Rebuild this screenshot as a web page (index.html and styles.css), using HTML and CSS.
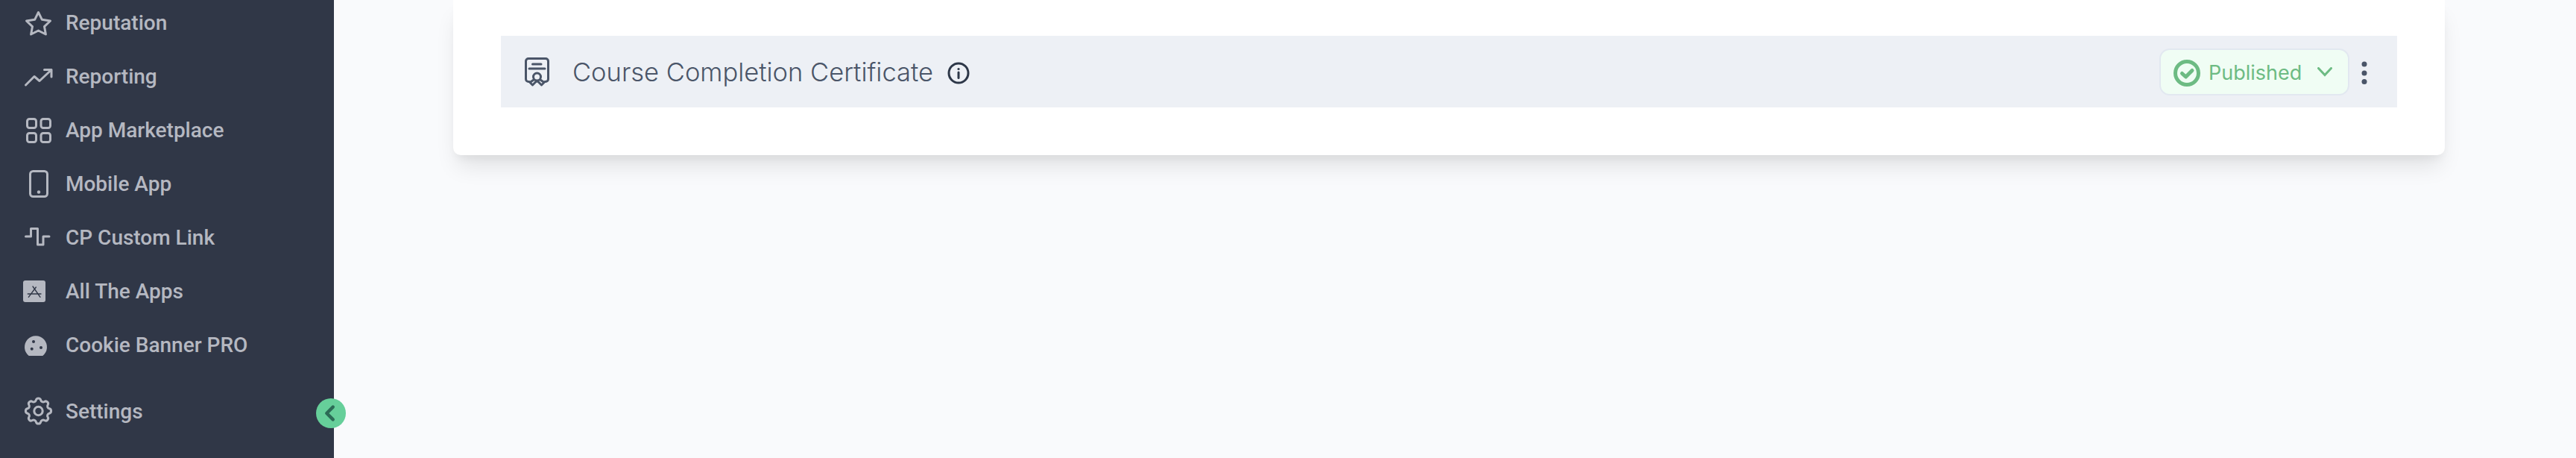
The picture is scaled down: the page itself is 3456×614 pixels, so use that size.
FILE: index.html
```html
<!DOCTYPE html>
<html lang="en">
<head>
    <meta charset="UTF-8">
    <title>Course Completion Certificate</title>
    <link rel="stylesheet" href="styles.css">
</head>
<body>
    <aside class="sidebar">
        <nav class="side-nav">
            <a class="nav-item" href="#">
                <svg class="nav-icon" viewBox="0 0 40 40"><polygon points="19.5,6.5 24.4,16.3 35.5,18 27.5,25.6 29.4,36 19.5,31 9.6,36 11.5,25.6 3.5,18 14.6,16.3"/></svg>
                <span>Reputation</span>
            </a>
            <a class="nav-item" href="#">
                <svg class="nav-icon" viewBox="0 0 40 40"><path d="M2.5 32L14 20.5l7 6L37 11.5M27.5 11.5H37V21"/></svg>
                <span>Reporting</span>
            </a>
            <a class="nav-item" href="#">
                <svg class="nav-icon" viewBox="0 0 40 40">
                    <rect x="4.5" y="5.5" width="12" height="12" rx="3"/>
                    <rect x="23" y="5.5" width="12.5" height="12" rx="3"/>
                    <rect x="4.5" y="24.5" width="12" height="12" rx="3"/>
                    <rect x="23" y="24.5" width="12.5" height="12" rx="3"/>
                </svg>
                <span>App Marketplace</span>
            </a>
            <a class="nav-item" href="#">
                <svg class="nav-icon" viewBox="0 0 40 40">
                    <rect x="8.5" y="3.5" width="23" height="34" rx="4"/>
                    <circle class="icon-fill" cx="20" cy="31.5" r="2.2"/>
                </svg>
                <span>Mobile App</span>
            </a>
            <a class="nav-item" href="#">
                <svg class="nav-icon" viewBox="0 0 40 40"><path d="M2.5 19H9.5V8.5H18.5V30H26V19H34"/></svg>
                <span>CP Custom Link</span>
            </a>
            <a class="nav-item" href="#">
                <svg class="nav-icon" viewBox="0 0 40 40">
                    <rect class="icon-fill" x="-1" y="6" width="30" height="29" rx="3"/>
                    <path class="icon-cut" d="M12 14l10 14.3M16.3 15L6.3 28.3M5.3 24H23"/>
                </svg>
                <span>All The Apps</span>
            </a>
            <a class="nav-item" href="#">
                <svg class="nav-icon" viewBox="0 0 40 40">
                    <path class="icon-fill" d="M6.7 35a15 15 0 1 1 18.6 0z"/>
                    <circle class="icon-dot" cx="13" cy="16" r="2"/>
                    <circle class="icon-dot" cx="23" cy="24" r="2"/>
                    <circle class="icon-dot" cx="10.7" cy="25.7" r="2"/>
                </svg>
                <span>Cookie Banner PRO</span>
            </a>
            <a class="nav-item nav-settings" href="#">
                <svg class="nav-icon" viewBox="0 0 40 40">
                    <g transform="translate(-3.3 -2.8) scale(1.9)" stroke-width="1.6">
                        <path d="M10.325 4.317c.426-1.756 2.924-1.756 3.35 0a1.724 1.724 0 002.573 1.066c1.543-.94 3.31.826 2.37 2.37a1.724 1.724 0 001.065 2.572c1.756.426 1.756 2.924 0 3.35a1.724 1.724 0 00-1.066 2.573c.94 1.543-.826 3.31-2.37 2.37a1.724 1.724 0 00-2.572 1.065c-.426 1.756-2.924 1.756-3.35 0a1.724 1.724 0 00-2.573-1.066c-1.543.94-3.31-.826-2.37-2.37a1.724 1.724 0 00-1.065-2.572c-1.756-.426-1.756-2.924 0-3.35a1.724 1.724 0 001.066-2.573c-.94-1.543.826-3.31 2.37-2.37.996.608 2.296.07 2.572-1.065z"/>
                        <circle cx="12" cy="12" r="3"/>
                    </g>
                </svg>
                <span>Settings</span>
            </a>
        </nav>
        <button class="collapse-btn">
            <svg viewBox="0 0 40 40" width="40" height="40"><path d="M22.7 11.7L14.3 20l8.4 8.3"/></svg>
        </button>
    </aside>

    <main class="main">
        <section class="card">
            <div class="cert-row">
                <svg class="cert-icon" viewBox="0 0 40 40">
                    <path d="M11 33.5H10A3.5 3.5 0 0 1 6.5 30V6A3.5 3.5 0 0 1 10 2.5H33A3.5 3.5 0 0 1 36.5 6V30A3.5 3.5 0 0 1 33 33.5H32"/>
                    <path d="M15.5 10H27M11 16H32"/>
                    <circle cx="21.5" cy="27" r="5"/>
                    <path d="M17 31l-5 3.5 3.5 3.5 4-4 2-1.5 2 1.5 4 4 3.5-3.5-5-3.5"/>
                </svg>
                <h2 class="cert-title">Course Completion Certificate</h2>
                <svg class="info-icon" viewBox="0 0 30 30">
                    <circle cx="15" cy="15" r="13"/>
                    <path d="M15 14v7.5"/>
                    <circle class="info-dot" cx="15" cy="9.5" r="1.6"/>
                </svg>
                <div class="cert-actions">
                    <button class="status-pill">
                        <svg class="status-check" viewBox="0 0 36 36">
                            <circle cx="18" cy="18" r="15.5"/>
                            <path d="M11.5 18.5l5 4.5 8.5-8.5"/>
                        </svg>
                        <span class="status-label">Published</span>
                        <svg class="status-chevron" viewBox="0 0 20 13"><path d="M1.5 1.5L10 10.5l8.5-9"/></svg>
                    </button>
                    <svg class="kebab" viewBox="0 0 8 32">
                        <circle cx="4" cy="4" r="3.5"/>
                        <circle cx="4" cy="16" r="3.5"/>
                        <circle cx="4" cy="27.5" r="3.5"/>
                    </svg>
                </div>
            </div>
        </section>
    </main>
</body>
</html>
```

FILE: styles.css
```css
:root {
    --sidebar: #303747;
    --sidebar-text: #b5b8c1;
    --row: #edf0f5;
    --slate: #4a5568;
    --green: #6dbb83;
}

* {
    margin: 0;
    padding: 0;
    box-sizing: border-box;
}

body {
    display: flex;
    height: 614px;
    overflow: hidden;
    background: #f9fafc;
    font-family: 'Inter', 'Liberation Sans', sans-serif;
}

.sidebar {
    position: relative;
    flex: 0 0 448px;
    background: var(--sidebar);
}

.side-nav {
    margin-top: -6px;
    padding-left: 32px;
}

.nav-item {
    display: flex;
    align-items: center;
    gap: 16px;
    height: 72px;
    color: var(--sidebar-text);
    font-family: 'Roboto', sans-serif;
    font-size: 28px;
    font-weight: 500;
    text-decoration: none;
}

.nav-settings {
    margin-top: 17px;
}

.nav-icon {
    flex: none;
    width: 40px;
    height: 40px;
    overflow: visible;
    fill: none;
    stroke: var(--sidebar-text);
    stroke-width: 3;
    stroke-linecap: round;
    stroke-linejoin: round;
}

.nav-icon .icon-fill {
    fill: var(--sidebar-text);
    stroke: none;
}

.nav-icon .icon-cut {
    stroke: var(--sidebar);
    stroke-width: 1.4;
}

.nav-icon .icon-dot {
    fill: var(--sidebar);
    stroke: none;
}

.collapse-btn {
    position: absolute;
    right: -16px;
    bottom: 40px;
    width: 40px;
    height: 40px;
    border: none;
    border-radius: 50%;
    background: #66cf9a;
}

.collapse-btn svg {
    display: block;
    fill: none;
    stroke: #2c6b56;
    stroke-width: 4.5;
    stroke-linecap: round;
    stroke-linejoin: round;
}

.main {
    flex: 1;
    padding: 0 176px 0 160px;
}

.card {
    padding: 48px 64px 64px;
    background: white;
    border-radius: 0 0 10px 10px;
    box-shadow: 0 20px 30px -6px rgba(0,0,0,0.1), 0 8px 12px -4px rgba(0,0,0,0.05);
}

.cert-row {
    display: flex;
    align-items: center;
    height: 96px;
    padding: 0 40px 0 27px;
    background: var(--row);
    color: var(--slate);
}

.cert-icon {
    flex: none;
    width: 40px;
    height: 40px;
    fill: none;
    stroke: var(--slate);
    stroke-width: 3;
    stroke-linejoin: round;
    stroke-linecap: round;
}

.cert-title {
    margin-left: 29px;
    font-size: 34.5px;
    font-weight: 300;
}

.info-icon {
    flex: none;
    width: 30px;
    height: 30px;
    margin: 4px 0 0 19px;
    fill: none;
    stroke: #2d3748;
    stroke-width: 3;
    stroke-linecap: round;
}

.info-icon .info-dot {
    fill: #2d3748;
    stroke: none;
}

.cert-actions {
    display: flex;
    align-items: center;
    gap: 16px;
    margin-left: auto;
}

.status-pill {
    display: flex;
    align-items: center;
    width: 255px;
    height: 63px;
    padding-left: 17px;
    border: 2px solid #e2e8f0;
    border-radius: 14px;
    background: #f0fdf4;
    color: var(--green);
    font-family: inherit;
    font-size: 27px;
}

.status-check {
    flex: none;
    width: 36px;
    height: 36px;
    margin: 4px 11px 0 0;
    fill: none;
    stroke: var(--green);
    stroke-width: 5;
    stroke-linecap: round;
    stroke-linejoin: round;
}

.status-label {
    padding-top: 2px;
}

.status-chevron {
    flex: none;
    width: 20px;
    height: 13px;
    margin-left: 21px;
    fill: none;
    stroke: var(--green);
    stroke-width: 3;
    stroke-linecap: round;
}

.kebab {
    flex: none;
    width: 8px;
    height: 32px;
    margin-top: 3px;
    fill: var(--slate);
}
```
